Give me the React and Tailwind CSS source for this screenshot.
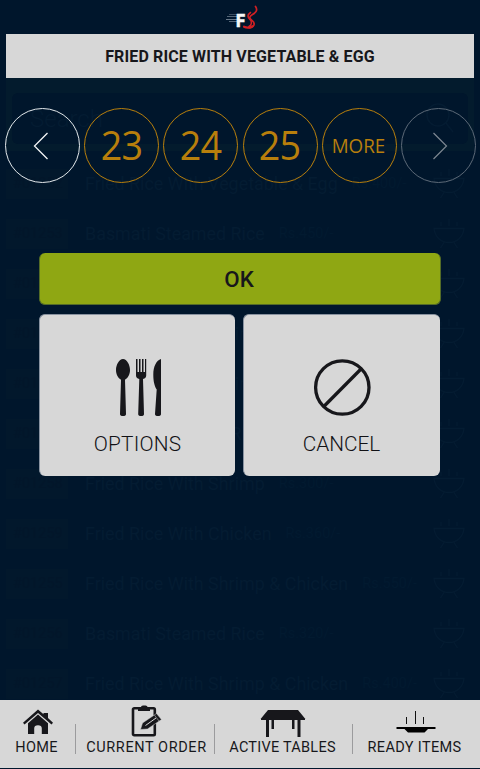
import React from "react";

const rows = [
  { id: "#01252", name: "Fried Rice With Vegetable & Egg", price: "Rs.400/-" },
  { id: "#01253", name: "Basmati Steamed Rice", price: "Rs.450/-" },
  { id: "#01254", name: "Fried Rice With Chicken", price: "Rs.360/-" },
  { id: "#01255", name: "Fried Rice With Shrimp", price: "Rs.300/-" },
  { id: "#01256", name: "Fried Rice With Shrimp", price: "Rs.320/-" },
  { id: "#01257", name: "Basmati Steamed Rice", price: "Rs.320/-" },
  { id: "#01258", name: "Fried Rice With Shrimp", price: "Rs.300/-" },
  { id: "#01259", name: "Fried Rice With Chicken", price: "Rs.360/-" },
  { id: "#01255", name: "Fried Rice With Shrimp & Chicken", price: "Rs.550/-" },
  { id: "#01256", name: "Basmati Steamed Rice", price: "Rs.320/-" },
  { id: "#01257", name: "Fried Rice With Shrimp & Chicken", price: "Rs.400/-" },
];

function Bowl() {
  return (
    <svg width="32" height="30" viewBox="0 0 32 30" fill="none" stroke="#041c32" strokeWidth="1.3">
      <path d="M1 9.5H31C30 18 24 23.5 16 23.5S2 18 1 9.5ZM11 23.5L7.500 29M21 23.5L24.500 29M16 0V7M8 3V7M24 3V7" />
    </svg>
  );
}

function Logo() {
  return (
    <svg width="36" height="26" viewBox="0 0 36 26">
      <g stroke="#8391a0" strokeWidth="1">
        <path d="M7 9.500H16" opacity=".45" />
        <path d="M5 11.500H16" opacity=".65" />
        <path d="M4 14.500H16" opacity=".8" />
        <path d="M7 16.500H16" opacity=".65" />
      </g>
      <text x="14" y="22" fill="#f5f7f7" stroke="#f5f7f7" strokeWidth=".4" fontSize="18" fontWeight="900" textLength="9" lengthAdjust="spacingAndGlyphs" fontFamily="Roboto, sans-serif">F</text>
      <g fill="none" stroke="#cf2024" strokeLinecap="round">
        <path d="M33.500 1.500C36 5 34 7.500 30.500 9.500C27 11.500 27 13 30 15.500C34 18.500 32 22.500 27 23" strokeWidth="1.700" />
        <path d="M28.500 7.500C25 10 25.500 12 28 14.500C30.500 17 29.500 20 27 21.500" strokeWidth="1.600" />
        <path d="M22 21.700Q26 23.800 30.500 21.300" strokeWidth="2.200" />
      </g>
    </svg>
  );
}

function Cutlery() {
  return (
    <svg width="48" height="58" viewBox="0 0 48 58" fill="#17171b">
      <path d="M9 0C13 0 16 6 16 11C16 15.500 13.700 19.200 11 20.700L12 55Q12 57 9 57Q6 57 6 55L7 20.700C4.300 19.200 2 15.500 2 11C2 6 5 0 9 0Z" />
      <path d="M22 0H23.500V13H25V0H26.500V13H28V0H29.500V13H31V0H32.200V16.500Q32.200 19 29 20L30 55Q30 57 27.100 57Q24.200 57 24.200 55L25.300 20Q22 19 22 16.500Z" />
      <path d="M47 0V55Q47 57 44 57Q41 57 41 55L42.700 30.500C40.500 27 39.300 22.500 39.300 15.500C39.300 7.500 42.500 1 47 0Z" />
    </svg>
  );
}

function Cancel() {
  return (
    <svg width="58" height="58" viewBox="0 0 58 58" fill="none" stroke="#17171b">
      <circle cx="29.300" cy="28.500" r="26.700" strokeWidth="3.300" />
      <path d="M10.800 47.500L48 10" strokeWidth="3.300" />
    </svg>
  );
}

function HomeIcon() {
  return (
    <svg width="30" height="26" viewBox="0 0 30 26" fill="#17171b">
      <path d="M15 .5L20.500 5.200V4H25V9L30 13.700L28.500 15.500L15 4L1.500 15.500L0 13.700Z" />
      <path d="M15 5.500L25 14.200V25H18.800V19.500Q18.800 16.200 15 16.200Q11.200 16.200 11.200 19.500V25H5V14.200Z" />
    </svg>
  );
}

function OrderIcon() {
  return (
    <svg width="32" height="32" viewBox="0 0 32 32">
      <rect x="2" y="3.300" width="21.800" height="27" rx="1.200" fill="none" stroke="#17171b" strokeWidth="2.600" />
      <path d="M7 2H10Q10 .5 12 .5H14.500Q16.500 .5 16.500 2H19V6H7Z" fill="#17171b" />
      <path d="M9.500 24.500L11.500 18L25.500 8.500L30.500 14.500L16.500 24Z" fill="#17171b" stroke="#d7d7d7" strokeWidth=".5" />
      <path d="M14.500 20.500L25 13" stroke="#d7d7d7" strokeWidth="1" />
      <path d="M23.500 10.200L28 16" stroke="#d7d7d7" strokeWidth=".5" />
    </svg>
  );
}

function TableIcon() {
  return (
    <svg width="46" height="28" viewBox="0 0 46 28" fill="#17171b">
      <path d="M8 1H38L45 9.500V11H1V9.500Z" />
      <path d="M6 11H9V28H6ZM37.500 11H40.500V28H37.500ZM11.500 11H14V20H11.500ZM32 11H34.500V20H32Z" />
    </svg>
  );
}

function ReadyIcon() {
  return (
    <svg width="40" height="24" viewBox="0 0 40 24">
      <path d="M.5 17H39.500V19H32L28.500 22.500H12L8.500 19H.5Z" fill="#000" />
      <path d="M10.500 7V14M19.500 1V14M27.500 7V14" stroke="#111" strokeWidth="1" />
    </svg>
  );
}

function MenuScreen() {
  return (
    <div className="h-[666px] overflow-hidden text-[#041c32]">
      <div className="mx-1.5 mt-[44px] h-[73px] bg-[#031b2d] px-1.5 pt-[15px]">
        <div className="flex h-[51px] items-center justify-between rounded-md bg-[#00162c] pr-3.5 pl-[18px]">
          <span className="text-[24px] font-light">Search</span>
          <svg width="28" height="31" viewBox="0 0 28 31" fill="none" stroke="#041c32" strokeWidth="1.500">
            <circle cx="12" cy="12" r="11" /><path d="M20 20L27 29" />
          </svg>
        </div>
      </div>
      <div className="pt-[8px]">
        {rows.map((r, i) => (
          <div key={i} className="flex h-[50px] items-center pl-1.5">
            <span className="flex h-[30px] w-[62px] shrink-0 items-center bg-[#02182c] pl-[7px] text-[14.500px] text-[#02162a]">{r.id}</span>
            <span className="ml-[17px] text-[17.900px] whitespace-nowrap">{r.name}</span>
            <span className="ml-3.5 text-[14.500px] whitespace-nowrap text-[#021a30]">{r.price}</span>
            <span className="mr-[15px] ml-auto"><Bowl /></span>
          </div>
        ))}
      </div>
    </div>
  );
}

function Round({ className, children }) {
  return <div className={`flex size-[75px] shrink-0 items-center justify-center rounded-full border ${className}`}>{children}</div>;
}

function Dialog() {
  return (
    <div className="absolute inset-x-0 top-[34px] flex flex-col">
      <div className="mx-1.5 flex h-11 items-center justify-center bg-[#d7d7d7] pt-0.5 text-[16px] font-bold text-[#17171b]">
        <span className="tracking-[0.130px]">FRIED RICE WITH VEGETABLE &amp; EGG</span>
      </div>
      <div className="mt-[30px] flex justify-between pr-1 pl-[5px] font-['Open_Sans','Noto_Sans',sans-serif] text-[#b87f0c]">
        <Round className="border-[#e3e8eb] pr-1">
          <svg width="16" height="28" viewBox="0 0 16 28" fill="none" stroke="#f2f4f5" strokeWidth="1.300"><path d="M14.500 1L1.500 14L14.500 27" /></svg>
        </Round>
        {["23", "24", "25"].map((n) => (
          <Round key={n} className="border-[#b87f0c] pr-px pb-0.5"><span className="scale-x-[0.92] text-[41px] leading-none tracking-[-1px]">{n}</span></Round>
        ))}
        <Round className="border-[#b87f0c] pr-0.5"><span className="scale-x-[0.94] text-[20px] leading-none">MORE</span></Round>
        <Round className="border-[#5c6977] pl-1">
          <svg width="16" height="28" viewBox="0 0 16 28" fill="none" stroke="#7d8792" strokeWidth="1.200"><path d="M1.500 1L14.500 14L1.500 27" /></svg>
        </Round>
      </div>
      <div className="mx-[39px] mt-[70px] flex h-[52px] items-center justify-center rounded-md border-r border-b border-l border-[#536b27] bg-[#8fa713] pt-0.5 pr-0.5 text-[22.300px] font-medium text-[#17171b]"><span>OK</span></div>
      <div className="mr-10 ml-[39px] mt-[9px] flex h-[162px] gap-2 text-[20.800px] font-light text-[#111115]">
        <div className="flex w-[196px] flex-col items-center rounded-md border-t border-l border-[#8892a0] bg-[#d7d7d7] pt-[44px]">
          <Cutlery />
          <span className="mt-3 tracking-[0.200px]">OPTIONS</span>
        </div>
        <div className="flex flex-1 flex-col items-center rounded-md border-t border-l border-[#8892a0] bg-[#d7d7d7] pt-[44px]">
          <Cancel />
          <span className="mt-3 pr-px">CANCEL</span>
        </div>
      </div>
    </div>
  );
}

function NavItem({ icon, label, className, tracking = "tracking-[0.350px]" }) {
  return (
    <div className={`flex flex-col items-center ${className}`}>
      <div className="flex h-[39px] items-end">{icon}</div>
      <span className={`text-[14.500px] leading-[18px] whitespace-nowrap ${tracking}`}>{label}</span>
    </div>
  );
}

export default function App() {
  return (
    <div className="relative flex h-[769px] w-[480px] flex-col overflow-hidden bg-[#00162c] font-[Roboto,sans-serif]">
      <header className="flex h-[34px] items-start justify-center pt-[5px]"><Logo /></header>
      <MenuScreen />
      <nav className="flex h-[68px] bg-[#d7d7d7] text-[#17171b]">
        <NavItem className="w-[75px] pr-[2px]" icon={<div className="pb-1 pl-[2px]"><HomeIcon /></div>} label="HOME" />
        <div className="mt-6 h-[30px] w-px bg-[#9b9b9d]" />
        <NavItem className="w-[138px] pl-[3px]" tracking="tracking-[0.600px]" icon={<div className="pb-0.5"><OrderIcon /></div>} label="CURRENT ORDER" />
        <div className="mt-6 h-[30px] w-px bg-[#9b9b9d]" />
        <NavItem className="w-[137px] pr-0.5" tracking="tracking-[0.250px]" icon={<div className="pb-0.5"><TableIcon /></div>} label="ACTIVE TABLES" />
        <div className="mt-6 h-[30px] w-px bg-[#9b9b9d]" />
        <NavItem className="flex-1 pr-1" icon={<div className="pb-[5px] pl-0.5"><ReadyIcon /></div>} label="READY ITEMS" />
      </nav>
      <Dialog />
    </div>
  );
}
